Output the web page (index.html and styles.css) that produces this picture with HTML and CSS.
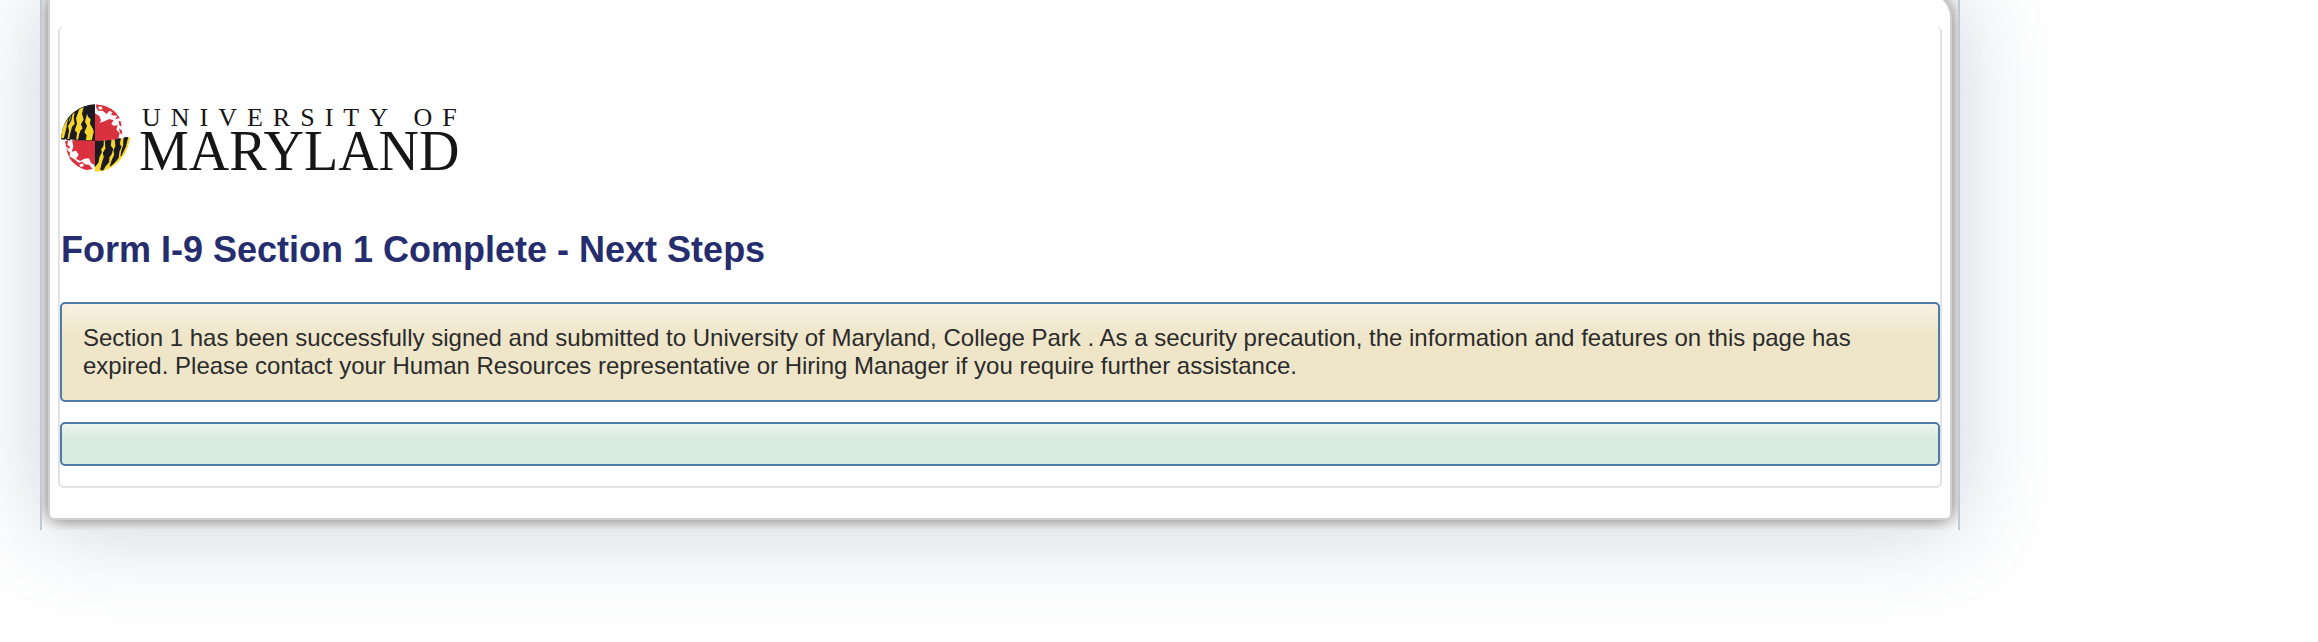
FILE: index.html
```html
<!DOCTYPE html>
<html lang="en">
<head>
<meta charset="utf-8">
<title>Form I-9 Section 1 Complete</title>
<link rel="stylesheet" href="styles.css">
</head>
<body>
<div class="page">
  <main class="panel">
    <div class="content">
      <svg class="logo" width="404" height="88" viewBox="0 0 404 88" role="img" aria-label="University of Maryland">
        <defs>
          <clipPath id="globe"><path d="M33 136Q36 62 98 36 119 27 136 28 190 30 212 75L219 126 241 125Q232 188 182 218 161 230 136 230 92 228 65 199 49 179 45 136z"/></clipPath>
        </defs>
        <g transform="translate(-10 -5) scale(.3333)">
          <g clip-path="url(#globe)">
            <path fill="#fff" d="M30 25h215v210H30z"/>
            <path fill="#1c1a20" d="M30 25h105v112Q80 137 30 129z"/>
            <path fill="#f4d62c" stroke="#1c1a20" stroke-width="4" d="M30 130L36 96 56 64 66 56 62 76 53 91 48 112 43 132zM59 62L77 47 73 68 76 88 68 96 62 118 59 135 50 133 55 108 52 90zM86 42L104 32 98 56 103 74 95 88 100 100 93 108 87 135 76 136 79 114 72 106 79 86 76 70zM111 50L116 64 124 72 122 86 131 102 135 116V138H105L108 121 101 112 109 93 103 80z"/>
            <path fill="#1c1a20" d="M84 137L88 116 97 103 101 112 101 137zM125 138L130 114 135 106V138z"/>
            <path fill="#f4d62c" d="M135 137Q190 137 245 125V235H135z"/>
            <path fill="#1c1a20" stroke="#1c1a20" stroke-width="3" d="M135 137H160L159 153 152 163 154 172 147 186 144 203 135 214zM166 137L183 136 181 152 188 162 184 177 177 187 176 202 166 213 159 225 152 224 157 203 163 186 160 174 168 160zM195 133L211 131 208 147 213 155 207 170 204 190 191 205 181 213 187 195 194 180 192 166 198 152zM222 129L233 127 226 156 213 182 216 165 221 151z"/>
            <path fill="#d9323e" d="M135 55L148 63 153 76 149 83 163 79 178 72 191 76 184 86 190 92 203 91 199 104 209 114 205 131Q175 137 135 137z"/>
            <path fill="#d9323e" d="M138 27L160 30 185 41 202 54 214 72 207 70 196 73 202 62 186 61 178 47 170 57 158 47 146 48 139 39z"/>
            <path fill="#fff" d="M144 36L154 34 158 42 148 44zM176 48L188 51 183 57z"/>
            <path fill="#d9323e" d="M206 77L216 80 218 97 208 91zM207 100L215 106 218 119 210 114z"/>
            <path fill="#d9323e" d="M66 136Q100 138 135 137V211L123 204 117 190 103 191 91 198 78 191 86 179 78 167 65 170 70 154z"/>
            <path fill="#d9323e" d="M44 138L55 137 52 149 61 156 51 164 61 174 58 184 73 193 86 203 98 200 104 208 117 209 128 222 107 226 79 214 53 188z"/>
            <path fill="#fff" d="M48 155L55 158 47 165zM63 181L70 182 70 191zM88 209L98 205 102 213 91 216z"/>
          </g>
        </g>
        <text class="logo-top" x="82" y="26">UNIVERSITY OF</text>
        <text class="logo-name" x="79" y="70">MARYLAND</text>
      </svg>
      <h1 class="title">Form I-9 Section 1 Complete - Next Steps</h1>
      <p class="notice notice-info">Section 1 has been successfully signed and submitted to University of Maryland, College Park . As a security precaution, the information and features on this page has expired. Please contact your Human Resources representative or Hiring Manager if you require further assistance.</p>
      <div class="notice notice-success"></div>
    </div>
  </main>
</div>
</body>
</html>
```
FILE: styles.css
```css
* { box-sizing: border-box; }

body {
  margin: 0;
  padding: 0 358px 112px 40px;
  overflow-x: hidden;
  background: #fff;
  color: #2b2b2b;
  font: 24px/28px "Liberation Sans", Arial, sans-serif;
}

.page {
  display: flow-root;
  margin-top: -6px;
  padding: 0 6px 10px;
  overflow: hidden;
  background: #fff;
  border: solid #c0c9d4;
  border-width: 0 2px;
  box-shadow: 0 0 90px rgba(70, 100, 125, 0.27);
}

.page .panel {
  padding: 32px 8px 30px;
  background: #fff;
  border: 2px solid #d0d0d0;
  border-top: 0;
  border-radius: 0 24px 6px 6px;
  box-shadow: 0 0 20px rgba(0, 0, 0, 0.6);
}

.content {
  padding-top: 74px;
  padding-bottom: 20px;
  border: 2px solid #e2e2e2;
  border-top: 0;
  border-radius: 6px;
}

.logo {
  display: block;
  max-width: 100%;
  overflow: visible;
}

.logo text {
  font-family: "Liberation Serif", "Times New Roman", serif;
  fill: #161616;
}

.logo-top {
  font-size: 26px;
  letter-spacing: 10px;
}

.logo-name { font-size: 56px; }

.title {
  margin: 41px 0 31px;
  padding-left: 1px;
  color: #262d6e;
  font-size: 36px;
  line-height: 42px;
}

.notice {
  min-height: 44px;
  margin: 20px 0 0;
  padding: 20px 20px 20px 21px;
  border: 2px solid #4f7ba6;
  border-radius: 5px;
}

.notice-info {
  background: linear-gradient(#f9f2e4, #efe6ca 30px);
}

.notice-success {
  background: linear-gradient(#f1f7f2, #d9eadf 13px);
}
```
